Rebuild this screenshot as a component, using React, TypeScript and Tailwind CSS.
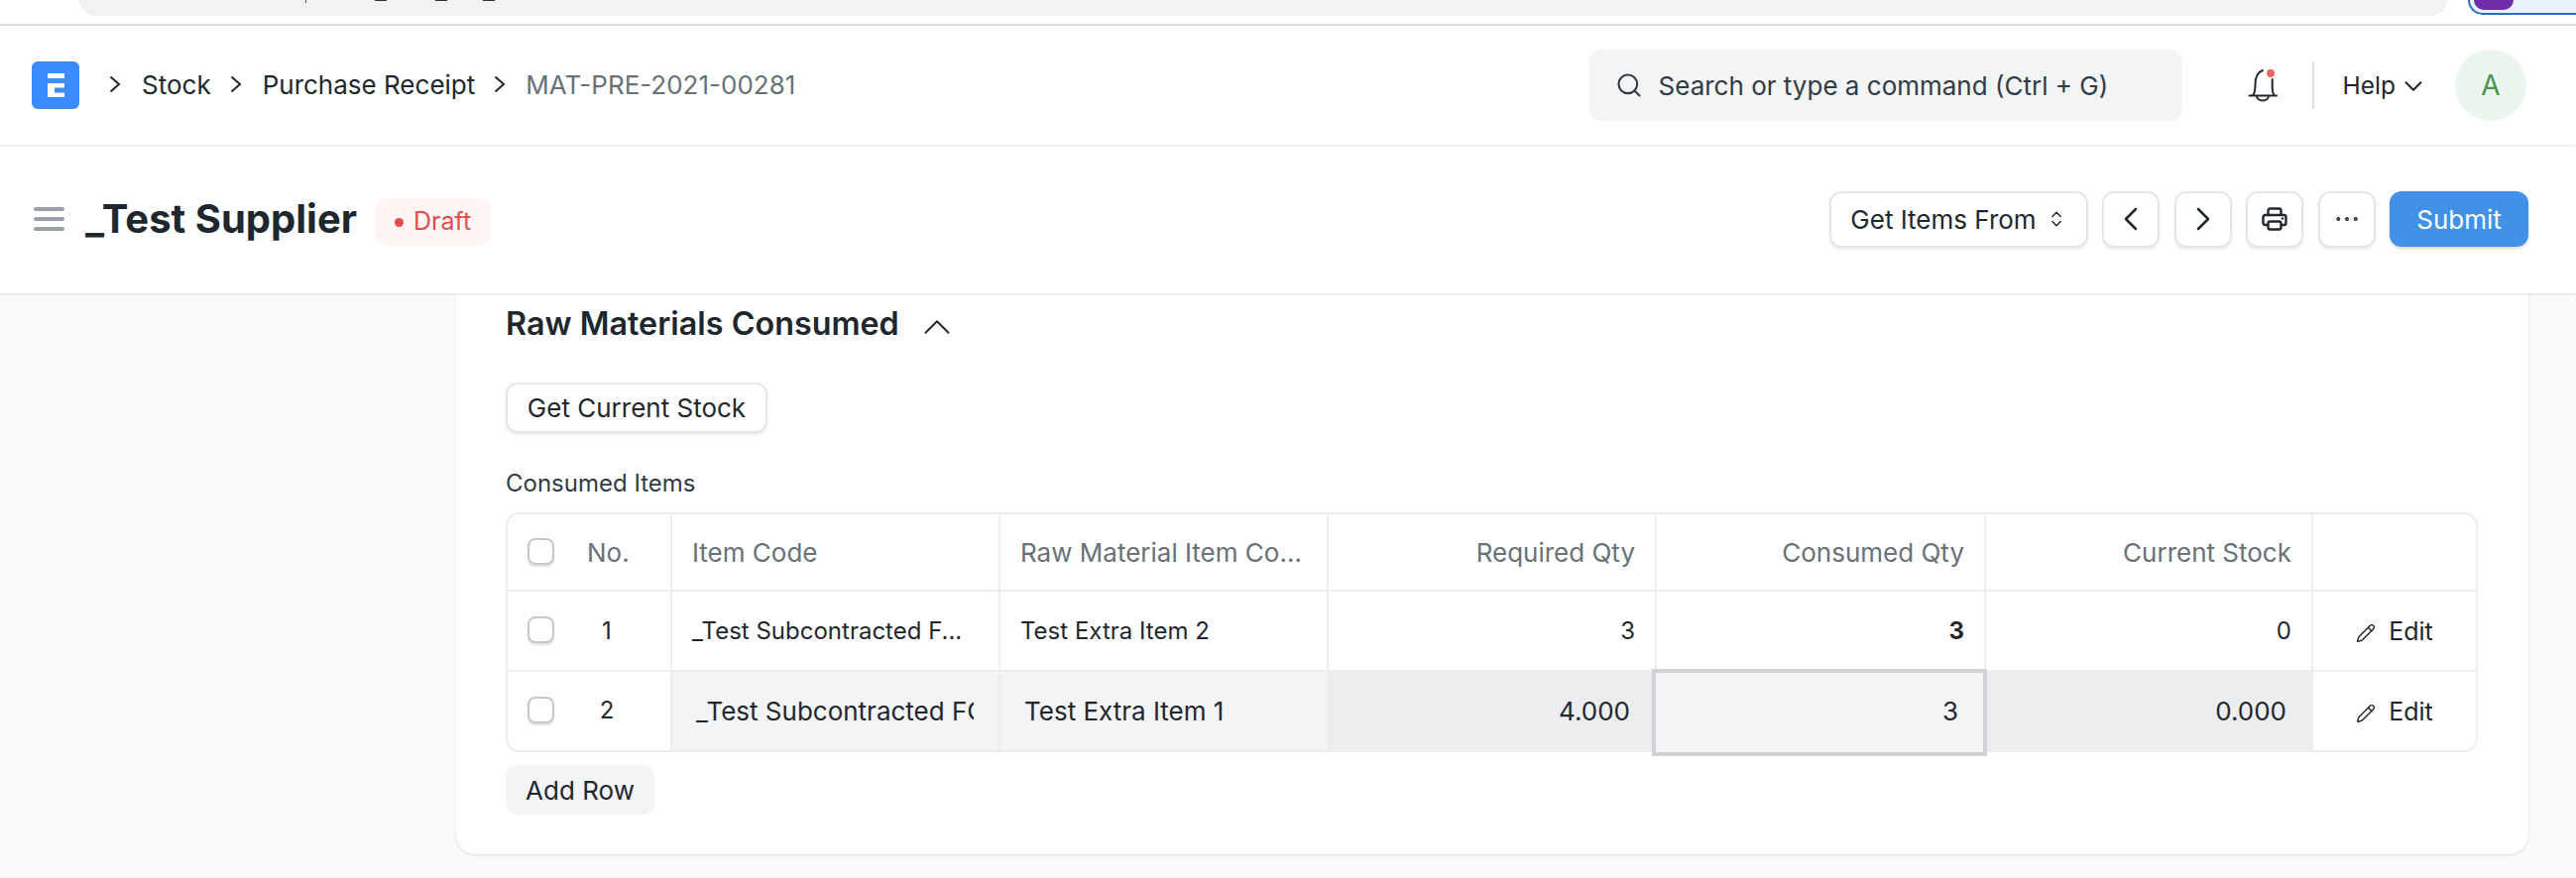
import { ChevronDown, ChevronLeft, ChevronRight, ChevronUp, ChevronsUpDown, Ellipsis, Pencil, Search } from 'lucide-react';

const crumbs = ['Stock', 'Purchase Receipt'];

const grid = 'grid grid-cols-[166px_331px_331px_331px_332px_330px_164px]';

function Bell() {
  return (
    <svg width="30" height="34" viewBox="0 0 30 34" fill="none" stroke="#1f272e" strokeWidth="2">
      <path d="M1.5 27.5h27.5M5 27.5c2.5-3 2.5-7 2.5-11 0-7 2-12.5 7.5-14.5M24.7 11v9c0 3 .7 5.5 2 7.5M9 27.5c0 6.5 12 6.5 12 0" strokeLinecap="round" />
      <circle cx="23" cy="5" r="4" fill="#f2655f" stroke="none" />
    </svg>
  );
}

function Logo() {
  return (
    <div className="flex h-12 w-12 items-center justify-center rounded-[6px] bg-[#3a8cff]">
      <svg width="17" height="24" viewBox="0 0 17 24" fill="white">
        <rect x="0" y="0" width="17" height="5" />
        <path d="M0 10h17v4.5H7v5h10V24H0z" />
      </svg>
    </div>
  );
}

function Crumb() {
  return (
    <svg width="12" height="18" viewBox="0 0 12 18" fill="none" stroke="#1f272e" strokeWidth="2">
      <path d="M1.5 1.5 10 9l-8.500 7.500" />
    </svg>
  );
}

function PrinterIcon() {
  return (
    <svg width="26" height="24" viewBox="0 0 26 24" fill="none" stroke="#1f272e" strokeWidth="2.400">
      <path d="M6.500 8V3.500a2 2 0 0 1 2-2h9a2 2 0 0 1 2 2V8" />
      <path d="M6.500 18H3.500a2 2 0 0 1-2-2v-6a2 2 0 0 1 2-2h19a2 2 0 0 1 2 2v6a2 2 0 0 1-2 2h-3" />
      <rect x="6.500" y="14.500" width="13" height="8" rx="2" />
      <circle cx="21" cy="11.500" r="1.200" fill="#1f272e" stroke="none" />
    </svg>
  );
}

function IconButton({ children }: { children: React.ReactNode }) {
  return (
    <button className="flex h-[57px] w-[58px] items-center justify-center rounded-[12px] border-2 border-[#e6e6e6] bg-white text-[#1f272e] shadow-[0_2px_3px_rgba(0,0,0,0.08)]">
      {children}
    </button>
  );
}

function Checkbox() {
  return <span className="-mt-0.5 block h-[27px] w-[27px] shrink-0 rounded-[8px] border-2 border-[#c4c9ce] bg-white shadow-[0_2px_2px_rgba(0,0,0,0.12)]" />;
}

function EditCell() {
  return (
    <div className="flex items-center justify-center gap-[13px] pt-[2px] text-[25px] text-[#1f272e]">
      <Pencil size={20} strokeWidth={1.7} className="mt-0.5" />
      <span>Edit</span>
    </div>
  );
}

export default function App() {
  return (
    <div className="h-[886px] w-[2598px] overflow-hidden bg-[#f9fafa] font-['Inter',sans-serif]">
      {/* browser strip */}
      <div className="flex h-[26px] items-start border-b-2 border-[#dddbe0] bg-white">
        <div className="ml-[80px] flex h-4 w-[2388px] items-start rounded-b-[30px] bg-[#f1f2f4]">
          <span className="ml-[228px] h-[3px] w-px bg-[#555]" />
          <span className="ml-[69px] h-px w-3 bg-[#333]" />
          <span className="ml-[49px] h-px w-3 bg-[#333]" />
          <span className="ml-[36px] h-px w-3 bg-[#333]" />
        </div>
        <div className="ml-[21px] flex h-[15px] flex-1 items-end rounded-bl-[30px] border-b-2 border-l-2 border-[#2b6cc9] bg-[#ebf1fb] pl-[4px]">
          <div className="h-[10px] w-10 self-start rounded-b-full bg-[#6f2da8]" />
        </div>
      </div>

      {/* navbar */}
      <header className="relative z-20 flex h-[120px] items-center bg-white pl-8 pr-[50px] shadow-[0_1px_2px_rgba(0,0,0,0.12)]">
        <Logo />
        <nav className="-mt-0.5 ml-[30px] flex items-center text-[26px] text-[#1f272e]">
          {crumbs.map((c) => (
            <div key={c} className="flex items-center">
              <Crumb />
              <span className="ml-[21px] mr-[19px]">{c}</span>
            </div>
          ))}
          <Crumb />
          <span className="ml-[20px] text-[#687178]">MAT-PRE-2021-00281</span>
        </nav>
        <div className="ml-auto flex h-[72px] w-[598px] items-center gap-[16px] rounded-[12px] bg-[#f3f4f6] pl-[26px] text-[26px] text-[#313b44]">
          <Search size={28} strokeWidth={1.8} />
          <span>Search or type a command (Ctrl + G)</span>
        </div>
        <div className="ml-[64px] flex w-[34px] justify-center"><Bell /></div>
        <div className="ml-[33px] h-12 w-0.5 bg-[#dfe2e5]" />
        <span className="ml-[29px] text-[24.500px] text-[#1f272e]">Help</span>
        <ChevronDown size={30} strokeWidth={1.600} className="ml-[3px] mt-0.5 text-[#1f272e]" />
        <div className="ml-[27px] flex h-[72px] w-[72px] items-center justify-center rounded-full bg-[#ebf5ee] text-[28px] text-[#48964f]">A</div>
      </header>

      {/* page head */}
      <div className="relative z-10 flex h-[150px] items-center bg-white pl-[34px] pr-[48px] shadow-[0_1px_3px_rgba(0,0,0,0.12)]">
        <div className="flex w-[31px] flex-col gap-[6px]">
          <span className="h-[4px] rounded bg-[#98a1a9]" />
          <span className="h-[4px] rounded bg-[#98a1a9]" />
          <span className="h-[4px] rounded bg-[#98a1a9]" />
        </div>
        <h1 className="ml-[21px] text-[40px] font-bold text-[#1f272e]">_Test Supplier</h1>
        <div className="ml-[18px] mt-[6px] flex h-12 items-center gap-[10px] rounded-[12px] bg-[#fff5f5] px-[20px] text-[25px] text-[#e24c4c]">
          <span className="h-[9px] w-[9px] rounded-full bg-[#e24c4c]" />
          Draft
        </div>
        <div className="ml-auto flex items-center gap-[14.500px]">
          <button className="flex h-[57px] w-[261px] items-center justify-center gap-[10px] rounded-[12px] border-2 border-[#e6e6e6] bg-white text-[26px] text-[#1f272e] shadow-[0_2px_3px_rgba(0,0,0,0.08)]">
            Get Items From
            <ChevronsUpDown size={20} strokeWidth={1.800} />
          </button>
          <IconButton><ChevronLeft size={40} strokeWidth={1.500} /></IconButton>
          <IconButton><ChevronRight size={40} strokeWidth={1.500} /></IconButton>
          <IconButton><PrinterIcon /></IconButton>
          <IconButton><Ellipsis size={30} strokeWidth={1.200} /></IconButton>
          <button className="h-[56px] w-[140px] rounded-[12px] bg-[#4191e9] text-[26px] text-white shadow-[0_2px_3px_rgba(0,0,0,0.15)]">Submit</button>
        </div>
      </div>

      {/* form card */}
      <main className="ml-[460px] mr-[48px] h-[566px] rounded-b-[20px] bg-white pl-[50px] pr-[51px] shadow-[0_1px_3px_rgba(0,0,0,0.12)]">
        <div className="flex items-center gap-[15px] pt-[11px]">
          <h2 className="text-[32.300px] font-semibold leading-[37px] text-[#1f272e]">Raw Materials Consumed</h2>
          <ChevronUp size={46} strokeWidth={1} className="-my-2 mt-0 text-[#1f272e]" />
        </div>
        <button className="mt-[41px] block h-[51px] w-[264px] rounded-[12px] border-2 border-[#e6e6e6] bg-white text-[26px] text-[#1f272e] shadow-[0_2px_3px_rgba(0,0,0,0.08)]">Get Current Stock</button>
        <div className="mt-[37px] text-[24px] leading-[28px] text-[#313b44]">Consumed Items</div>

        <div className="mt-[15px] rounded-[14px] border-2 border-[#ededed] text-[24px] text-[#1f272e]">
          <div className={`${grid} h-[78px] border-b-2 border-[#ededed] text-[26px] text-[#687178]`}>
            <div className="flex items-center border-r-2 border-[#ededed] pl-[20px]">
              <Checkbox />
              <span className="ml-[33px]">No.</span>
            </div>
            <div className="flex items-center border-r-2 border-[#ededed] pl-[20px]">Item Code</div>
            <div className="flex items-center border-r-2 border-[#ededed] pl-[20px]">Raw Material Item Co...</div>
            <div className="flex items-center justify-end border-r-2 border-[#ededed] pr-[20px]">Required Qty</div>
            <div className="flex items-center justify-end border-r-2 border-[#ededed] pr-[20px]">Consumed Qty</div>
            <div className="flex items-center justify-end border-r-2 border-[#ededed] pr-[20px]">Current Stock</div>
            <div />
          </div>

          <div className={`${grid} h-[81px] border-b-2 border-[#ededed]`}>
            <div className="flex items-center border-r-2 border-[#ededed] pl-[20px]">
              <Checkbox />
              <span className="ml-[33px] w-[40px] text-center">1</span>
            </div>
            <div className="flex items-center border-r-2 border-[#ededed] pl-[20px]">_Test Subcontracted F...</div>
            <div className="flex items-center border-r-2 border-[#ededed] pl-[20px]">Test Extra Item 2</div>
            <div className="flex items-center justify-end border-r-2 border-[#ededed] pr-[20px]">3</div>
            <div className="flex items-center justify-end border-r-2 border-[#ededed] pr-[20px] font-bold">3</div>
            <div className="flex items-center justify-end border-r-2 border-[#ededed] pr-[20px]">0</div>
            <EditCell />
          </div>

          <div className={`${grid} h-[79px] text-[26px]`}>
            <div className="flex items-center border-r-2 border-[#ededed] pl-[20px] text-[24px]">
              <Checkbox />
              <span className="-mt-0.5 ml-[33px] w-[40px] text-center">2</span>
            </div>
            <div className="flex min-w-0 items-center border-r-2 border-[#ededed] bg-[#f3f4f6] pl-[24px] pr-[25px]">
              <span className="min-w-0 overflow-hidden whitespace-nowrap">_Test Subcontracted FG Item 1</span>
            </div>
            <div className="flex items-center border-r-2 border-[#ededed] bg-[#f3f4f6] pl-[24px]">Test Extra Item 1</div>
            <div className="flex items-center justify-end bg-[#ecedef] pr-[27px]">4.000</div>
            <div className="relative z-10 -mb-[6px] -ml-[5px] -mr-px -mt-[3px] flex items-center justify-end border-4 border-[#d1d2d6] bg-[#f3f4f6] pb-[3px] pr-[25px]">3</div>
            <div className="flex items-center justify-end bg-[#ecedef] pr-[27px]">0.000</div>
            <div className="flex items-center"><div className="flex-1"><EditCell /></div></div>
          </div>
        </div>

        <button className="mt-[13px] block h-[50px] w-[150px] rounded-[12px] bg-[#f3f4f6] text-[26px] text-[#1f272e]">Add Row</button>
      </main>
    </div>
  );
}
